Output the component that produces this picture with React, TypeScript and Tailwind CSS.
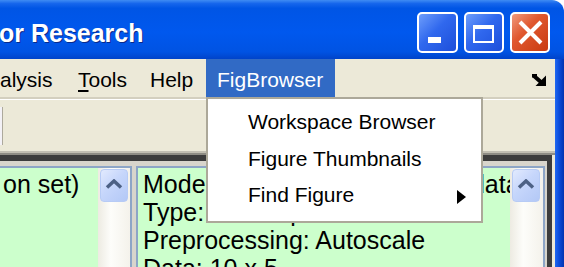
const UpButton = () => (
  <div className="ml-[2px] mt-[1px] w-[28px] h-[33px] rounded-[4px] border border-[#B7CBF5] bg-[linear-gradient(135deg,#E2EAFE_0%,#C6D6FB_45%,#B3C8F6_100%)] flex items-center justify-center">
    <svg width="18" height="10" viewBox="0 0 18 10" className="-mt-[3px]">
      <polyline points="2,8.5 9,2 16,8.5" fill="none" stroke="#4D6185" strokeWidth="3.5" />
    </svg>
  </div>
);

const App = () => {
  return (
    <div className="relative w-[564px] h-[267px] overflow-hidden bg-white font-['Liberation_Sans',Arial,sans-serif] text-black">
      {/* title bar */}
      <div className="h-[59px] flex items-start rounded-tr-[12px] bg-[linear-gradient(to_bottom,#3F8CF3_0%,#1666EC_6%,#0055E5_14%,#0058EE_55%,#0053E3_88%,#0043C9_100%)]">
        <span className="mt-[21px] -ml-[1px] text-[25px] leading-[25px] font-bold text-white whitespace-nowrap [text-shadow:1px_1px_0_#0A2A8A]">
          or Research
        </span>
        <div className="ml-auto mr-[14px] mt-[12px] flex gap-[6px]">
          <div className="w-[41px] h-[41px] rounded-[5px] border-2 border-white bg-[linear-gradient(135deg,#6E9EFB_0%,#3068EE_45%,#1D4FDA_100%)]">
            <svg width="37" height="37" viewBox="0 0 37 37">
              <rect x="9" y="23" width="13" height="6" fill="white" />
            </svg>
          </div>
          <div className="w-[40px] h-[41px] rounded-[5px] border-2 border-white bg-[linear-gradient(135deg,#6E9EFB_0%,#3068EE_45%,#1D4FDA_100%)]">
            <svg width="36" height="37" viewBox="0 0 36 37">
              <path d="M7 11 H28 V29 H7 Z M9 15 V27 H26 V15 Z" fill="white" fillRule="evenodd" />
            </svg>
          </div>
          <div className="w-[40px] h-[41px] rounded-[5px] border-2 border-white bg-[linear-gradient(135deg,#F09A7E_0%,#E0582F_40%,#C93A10_100%)]">
            <svg width="36" height="37" viewBox="0 0 36 37">
              <path d="M8 8 L29 29 M29 8 L8 29" stroke="white" strokeWidth="4" />
            </svg>
          </div>
        </div>
      </div>

      <div className="flex h-[208px]">
        <div className="flex-1 min-w-0 flex flex-col bg-[#ECE9D8]">
          {/* menu bar */}
          <div className="shrink-0 h-[38px] flex items-stretch text-[21px] leading-[21px] whitespace-nowrap">
            <div className="w-[65px] flex items-center pt-[3px]">alysis</div>
            <div className="w-[75px] pl-[13px] flex items-center pt-[3px]">
              <span>
                <span className="underline underline-offset-[3px]">T</span>ools
              </span>
            </div>
            <div className="w-[66px] pl-[10px] flex items-center pt-[3px]">Help</div>
            <div className="w-[129px] pl-[11px] flex items-center pt-[3px] bg-[#316AC5] text-white">FigBrowser</div>
            <div className="ml-auto mr-[9px] flex items-center pt-[3px]">
              <svg width="14" height="12" viewBox="0 0 14 12">
                <rect x="0" y="0" width="5" height="3.5" fill="black" />
                <path d="M1.5 1.5 L10 9" stroke="black" strokeWidth="4" />
                <polygon points="14,1.5 14,12 3.5,12" fill="black" />
              </svg>
            </div>
          </div>
          <div className="shrink-0 h-[2px] bg-[#D3CFBF]" />
          {/* toolbar */}
          <div className="shrink-0 h-[52px] border-t border-white flex items-start">
            <div className="mt-[7px] w-[3px] h-[38px] bg-[#F3F1F6] border-r border-[#ADA99C]" />
          </div>
          <div className="shrink-0 h-[2px] bg-[#C2BFB2]" />
          <div className="shrink-0 h-[2px] bg-[#8E8C84]" />
          {/* panels */}
          <div className="flex-1 min-h-0 overflow-hidden mr-[3px] border-t-[6px] border-r-[5px] border-[#3C3C3C] bg-[#D8D5CC] pt-[5px] flex items-stretch">
            <div className="w-[132px] shrink-0 border-t-2 border-r-2 border-[#8DA5C6] flex">
              <div className="w-[98px] bg-[#CCFFCC] text-[25px] leading-[28px] pt-[2px] pl-[3px] whitespace-nowrap overflow-hidden">
                on set)
              </div>
              <div className="w-[32px] bg-[linear-gradient(to_right,#EDEBE2,#FDFDFA_40%,#F4F2EB)]">
                <UpButton />
              </div>
            </div>
            <div className="w-[4px] shrink-0" />
            <div className="w-[409px] shrink-0 border-t-2 border-x-2 border-[#8DA5C6] flex">
              <div className="w-[372px] bg-[#CCFFCC] text-[25px] leading-[28px] pt-[2px] pl-[5px] whitespace-nowrap overflow-hidden">
                <div>Model: PLS-DA 1 (calibration data)</div>
                <div>Type: Decomposition</div>
                <div>Preprocessing: Autoscale</div>
                <div>Data: 10 x 5</div>
              </div>
              <div className="w-[33px] bg-[linear-gradient(to_right,#EDEBE2,#FDFDFA_40%,#F4F2EB)]">
                <UpButton />
              </div>
            </div>
          </div>
        </div>
        <div className="w-[9px] shrink-0 bg-[linear-gradient(to_right,#1F68F2,#0B4CDB_45%,#0034B0)]" />
      </div>

      {/* FigBrowser dropdown */}
      <div className="absolute left-[206px] top-[97px] w-[277px] h-[126px] bg-white border-2 border-[#ACA899] pt-[4.5px] text-[21px] leading-[21px] whitespace-nowrap">
        <div className="h-[36.5px] flex items-center pl-[40px]">Workspace Browser</div>
        <div className="h-[36.5px] flex items-center pl-[40px]">Figure Thumbnails</div>
        <div className="h-[36.5px] flex items-center pl-[40px]">
          <span>Find Figure</span>
          <svg width="9" height="14" viewBox="0 0 9 14" className="ml-auto mr-[15px] mt-[5px]">
            <polygon points="0,0 9,7 0,14" fill="black" />
          </svg>
        </div>
      </div>
    </div>
  );
};

export default App;
